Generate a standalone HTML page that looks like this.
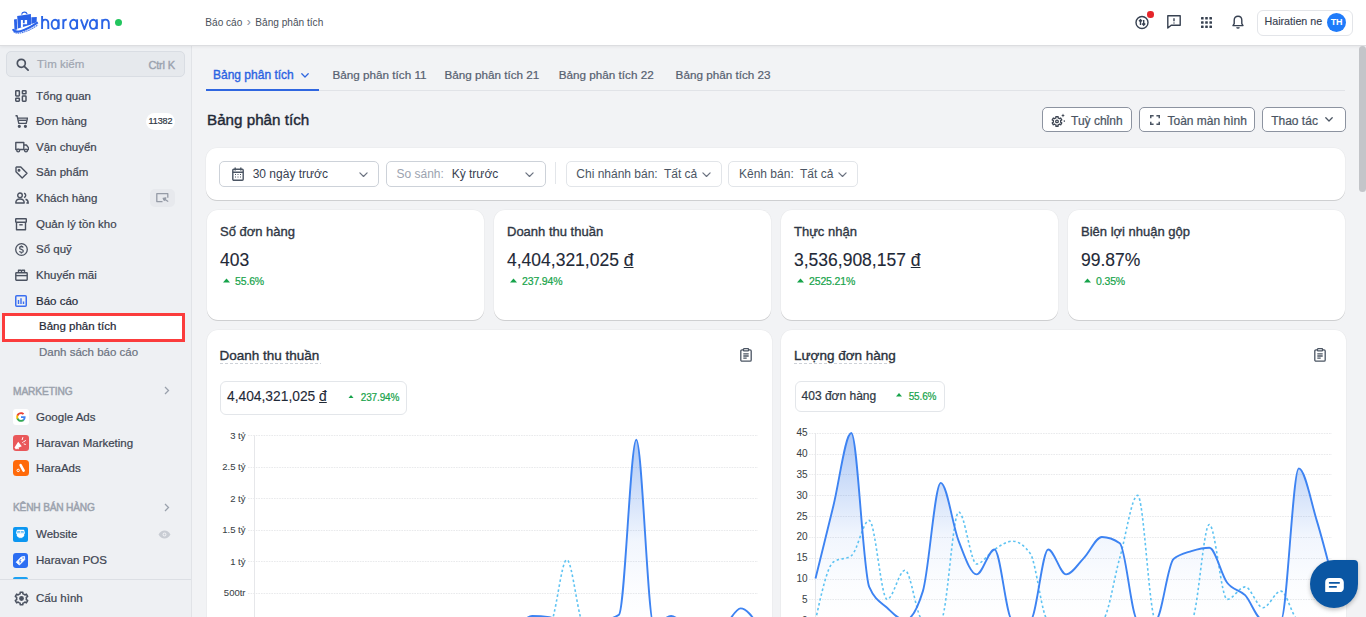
<!DOCTYPE html>
<html><head><meta charset="utf-8">
<style>
*{box-sizing:border-box;margin:0;padding:0}
html,body{width:1366px;height:617px;overflow:hidden;background:#f2f3f5;font-family:"Liberation Sans",sans-serif;}
.abs{position:absolute}
svg{display:block}
#header{position:absolute;left:0;top:0;width:1366px;height:46px;background:#fff;border-bottom:1px solid #dcdde0;z-index:5;box-shadow:0 1px 3px rgba(0,0,0,.06)}
#side{position:absolute;left:0;top:46px;width:192px;height:571px;background:#eef0f3;border-right:1px solid #e1e3e7;z-index:2}
.si{position:absolute;left:0;width:191px;height:25.6px;line-height:25.6px;font-size:11.5px;white-space:nowrap}
.si .ic{position:absolute;left:15px;top:6.8px;width:14px;height:13px;display:flex;align-items:center}
.si .tx{position:absolute;left:36px;top:0}
.t{position:absolute;white-space:nowrap}
.btn{position:absolute;top:107px;height:24.6px;border:1px solid #8c93a0;border-radius:5px;background:#fff}
.card{position:absolute;background:#fff;border-radius:11px;box-shadow:0 1px 0.5px rgba(0,0,0,.13),0 0 0 0.6px rgba(0,0,0,.04)}
.dd{position:absolute;height:26px;border:1px solid #e2e5e9;border-radius:5px;background:#fff}
#main{position:absolute;left:192px;top:46px;width:1174px;height:571px;overflow:hidden}
#main > .inner{position:absolute;left:-192px;top:-46px;width:1366px;height:617px}
</style></head><body>
<div id="main"><div class="inner">
<div class="t" style="left:213px;top:69.24px;font-size:12px;line-height:1;color:#2a62e2;font-weight:400;-webkit-text-stroke:0.35px #2a62e2">Bảng phân tích</div>
<div class="abs" style="left:301px;top:73px"><svg width="8" height="4.8" viewBox="0 0 10 6" fill="none" stroke="#2f66e0" stroke-width="1.6" stroke-linecap="round" stroke-linejoin="round"><path d="M1 1l4 4 4-4"/></svg></div>
<div class="abs" style="left:206px;top:90px;width:1139px;height:1px;background:#e1e3e7"></div>
<div class="abs" style="left:206px;top:89px;width:113px;height:2px;background:#2f66e0"></div>
<div class="t" style="left:332.5px;top:69.30px;font-size:11.7px;line-height:1;color:#566070;font-weight:400;-webkit-text-stroke:0.21px #566070;">Bảng phân tích 11</div>
<div class="t" style="left:444.4px;top:69.30px;font-size:11.7px;line-height:1;color:#566070;font-weight:400;-webkit-text-stroke:0.21px #566070;">Bảng phân tích 21</div>
<div class="t" style="left:558.8px;top:69.30px;font-size:11.7px;line-height:1;color:#566070;font-weight:400;-webkit-text-stroke:0.21px #566070;">Bảng phân tích 22</div>
<div class="t" style="left:675.6px;top:69.30px;font-size:11.7px;line-height:1;color:#566070;font-weight:400;-webkit-text-stroke:0.21px #566070;">Bảng phân tích 23</div>
<div class="t" style="left:207px;top:111.73px;font-size:15.2px;line-height:1;color:#1f2937;font-weight:400;-webkit-text-stroke:0.4px #1f2937">Bảng phân tích</div>
<div class="btn" style="left:1042px;width:89.5px"></div>
<div class="btn" style="left:1138.5px;width:116px"></div>
<div class="btn" style="left:1261.5px;width:84px"></div>
<div class="t" style="left:1071px;top:114.64px;font-size:12px;line-height:1;color:#4b5563;font-weight:400;-webkit-text-stroke:0.22px #4b5563;">Tuỳ chỉnh</div>
<div class="t" style="left:1167.5px;top:114.64px;font-size:12px;line-height:1;color:#4b5563;font-weight:400;-webkit-text-stroke:0.22px #4b5563;">Toàn màn hình</div>
<div class="t" style="left:1271.2px;top:114.64px;font-size:12px;line-height:1;color:#4b5563;font-weight:400;-webkit-text-stroke:0.22px #4b5563;">Thao tác</div>
<div class="abs" style="left:1325px;top:117px"><svg width="8" height="4.8" viewBox="0 0 10 6" fill="none" stroke="#4b5563" stroke-width="1.6" stroke-linecap="round" stroke-linejoin="round"><path d="M1 1l4 4 4-4"/></svg></div>
<svg class="abs" style="left:1051.3px;top:113px" width="16" height="15" viewBox="0 0 16 15" fill="none" stroke="#3d4552" stroke-width="1.3" stroke-linejoin="round"><path d="M4.32,5.10 L4.92,4.86 L4.88,3.53 L7.12,3.53 L7.08,4.86 L8.02,5.30 L8.52,5.69 L9.66,4.99 L10.78,6.94 L9.61,7.57 L9.69,8.59 L9.61,9.23 L10.78,9.86 L9.66,11.81 L8.52,11.11 L7.68,11.70 L7.08,11.94 L7.12,13.27 L4.88,13.27 L4.92,11.94 L3.98,11.50 L3.48,11.11 L2.34,11.81 L1.22,9.86 L2.39,9.23 L2.31,8.21 L2.39,7.57 L1.22,6.94 L2.34,4.99 L3.48,5.69Z"/><circle cx="6" cy="8.4" r="1.3"/><path d="M12,0.6 L12.6,1.9 L13.9,2.5 L12.6,3.1 L12,4.4 L11.4,3.1 L10.1,2.5 L11.4,1.9Z" fill="#3d4552" stroke="none"/><circle cx="13.3" cy="8.1" r=".8" fill="#3d4552" stroke="none"/></svg>
<svg class="abs" style="left:1150px;top:115px" width="10" height="10" viewBox="0 0 10 10" fill="none" stroke="#4b5563" stroke-width="1.5"><path d="M.75 3.2V.75h2.9M6.4 .75h2.85v2.45M9.25 6.8v2.45H6.4M3.6 9.25H.75V6.8"/></svg>
<div class="card" style="left:206px;top:148px;width:1139px;height:52px"></div>
<div class="dd" style="left:219px;top:161px;width:160px;border-color:#cdd2d9"></div>
<div class="dd" style="left:386px;top:161px;width:159.5px;border-color:#cdd2d9"></div>
<div class="abs" style="left:555px;top:162px;width:1px;height:22px;background:#e3e6ea"></div>
<div class="dd" style="left:566px;top:161px;width:155.5px"></div>
<div class="dd" style="left:728px;top:161px;width:129.5px"></div>
<svg class="abs" style="left:232px;top:167px" width="12" height="14" viewBox="0 0 12 14" fill="none" stroke="#4b5563" stroke-width="1.4"><rect x="0.8" y="2.2" width="10.4" height="11" rx="1"/><path d="M3.2 0.5v3M8.8 0.5v3M0.8 5.2h10.4"/><path d="M3 7.5h1M5.5 7.5h1M8 7.5h1M3 10h1M5.5 10h1M8 10h1" stroke-width="1.2"/></svg>
<div class="t" style="left:252.7px;top:167.84px;font-size:12px;line-height:1;color:#374151;font-weight:400;">30 ngày trước</div>
<div class="abs" style="left:359px;top:171.5px"><svg width="9" height="5.4" viewBox="0 0 10 6" fill="none" stroke="#6b7280" stroke-width="1.3" stroke-linecap="round" stroke-linejoin="round"><path d="M1 1l4 4 4-4"/></svg></div>
<div class="t" style="left:396.5px;top:167.84px;font-size:12px;line-height:1;color:#9ca3af;font-weight:400;">So sánh:</div>
<div class="t" style="left:451.7px;top:167.84px;font-size:12px;line-height:1;color:#374151;font-weight:400;">Kỳ trước</div>
<div class="abs" style="left:525px;top:171.5px"><svg width="9" height="5.4" viewBox="0 0 10 6" fill="none" stroke="#6b7280" stroke-width="1.3" stroke-linecap="round" stroke-linejoin="round"><path d="M1 1l4 4 4-4"/></svg></div>
<div class="t" style="left:576.3px;top:167.84px;font-size:12px;line-height:1;color:#4b5563;font-weight:400;">Chi nhánh bán:</div>
<div class="t" style="left:663.9px;top:167.84px;font-size:12px;line-height:1;color:#4b5563;font-weight:400;">Tất cả</div>
<div class="abs" style="left:702px;top:171.5px"><svg width="9" height="5.4" viewBox="0 0 10 6" fill="none" stroke="#6b7280" stroke-width="1.3" stroke-linecap="round" stroke-linejoin="round"><path d="M1 1l4 4 4-4"/></svg></div>
<div class="t" style="left:739px;top:167.84px;font-size:12px;line-height:1;color:#4b5563;font-weight:400;">Kênh bán:</div>
<div class="t" style="left:800px;top:167.84px;font-size:12px;line-height:1;color:#4b5563;font-weight:400;">Tất cả</div>
<div class="abs" style="left:838px;top:171.5px"><svg width="9" height="5.4" viewBox="0 0 10 6" fill="none" stroke="#6b7280" stroke-width="1.3" stroke-linecap="round" stroke-linejoin="round"><path d="M1 1l4 4 4-4"/></svg></div>
<div class="card" style="left:207px;top:210px;width:277px;height:110px"></div>
<div class="t" style="left:220px;top:225.20px;font-size:13px;line-height:1;color:#2f3744;font-weight:400;-webkit-text-stroke:0.35px #2f3744">Số đơn hàng</div>
<div class="t" style="left:220px;top:252.39px;font-size:17.5px;line-height:1;color:#1f2937;font-weight:400;-webkit-text-stroke:0.12px #1f2937">403</div>
<svg class="abs" style="left:223px;top:278px" width="7" height="5" viewBox="0 0 7 5"><path d="M0 4.5L3.5 0.5 7 4.5z" fill="#16a34a"/></svg>
<div class="t" style="left:235px;top:275.71px;font-size:10.5px;line-height:1;color:#16a34a;font-weight:400;-webkit-text-stroke:0.2px #16a34a;letter-spacing:-0.15px">55.6%</div>
<div class="card" style="left:494px;top:210px;width:277px;height:110px"></div>
<div class="t" style="left:507px;top:225.20px;font-size:13px;line-height:1;color:#2f3744;font-weight:400;-webkit-text-stroke:0.35px #2f3744">Doanh thu thuần</div>
<div class="t" style="left:507px;top:252.39px;font-size:17.5px;line-height:1;color:#1f2937;font-weight:400;-webkit-text-stroke:0.12px #1f2937">4,404,321,025 <u>đ</u></div>
<svg class="abs" style="left:510px;top:278px" width="7" height="5" viewBox="0 0 7 5"><path d="M0 4.5L3.5 0.5 7 4.5z" fill="#16a34a"/></svg>
<div class="t" style="left:522px;top:275.71px;font-size:10.5px;line-height:1;color:#16a34a;font-weight:400;-webkit-text-stroke:0.2px #16a34a;letter-spacing:-0.15px">237.94%</div>
<div class="card" style="left:781px;top:210px;width:277px;height:110px"></div>
<div class="t" style="left:794px;top:225.20px;font-size:13px;line-height:1;color:#2f3744;font-weight:400;-webkit-text-stroke:0.35px #2f3744">Thực nhận</div>
<div class="t" style="left:794px;top:252.39px;font-size:17.5px;line-height:1;color:#1f2937;font-weight:400;-webkit-text-stroke:0.12px #1f2937">3,536,908,157 <u>đ</u></div>
<svg class="abs" style="left:797px;top:278px" width="7" height="5" viewBox="0 0 7 5"><path d="M0 4.5L3.5 0.5 7 4.5z" fill="#16a34a"/></svg>
<div class="t" style="left:809px;top:275.71px;font-size:10.5px;line-height:1;color:#16a34a;font-weight:400;-webkit-text-stroke:0.2px #16a34a;letter-spacing:-0.15px">2525.21%</div>
<div class="card" style="left:1068px;top:210px;width:277px;height:110px"></div>
<div class="t" style="left:1081px;top:225.20px;font-size:13px;line-height:1;color:#2f3744;font-weight:400;-webkit-text-stroke:0.35px #2f3744">Biên lợi nhuận gộp</div>
<div class="t" style="left:1081px;top:252.39px;font-size:17.5px;line-height:1;color:#1f2937;font-weight:400;-webkit-text-stroke:0.12px #1f2937">99.87%</div>
<svg class="abs" style="left:1084px;top:278px" width="7" height="5" viewBox="0 0 7 5"><path d="M0 4.5L3.5 0.5 7 4.5z" fill="#16a34a"/></svg>
<div class="t" style="left:1096px;top:275.71px;font-size:10.5px;line-height:1;color:#16a34a;font-weight:400;-webkit-text-stroke:0.2px #16a34a;letter-spacing:-0.15px">0.35%</div>
<div class="card" style="left:207px;top:330px;width:564.5px;height:320px"></div>
<div class="card" style="left:781px;top:330px;width:564.5px;height:320px"></div>
<div class="t" style="left:219.5px;top:349.07px;font-size:13.5px;line-height:1;color:#2a313c;font-weight:400;-webkit-text-stroke:0.35px #2a313c">Doanh thu thuần</div>
<div class="abs" style="left:220px;top:362.5px;width:101px;height:1.5px;background:repeating-linear-gradient(90deg,#cdd1d7 0 3px,transparent 3px 5px)"></div>
<div class="t" style="left:794px;top:349.07px;font-size:13.5px;line-height:1;color:#2a313c;font-weight:400;-webkit-text-stroke:0.35px #2a313c">Lượng đơn hàng</div>
<div class="abs" style="left:794px;top:362.5px;width:100px;height:1.5px;background:repeating-linear-gradient(90deg,#cdd1d7 0 3px,transparent 3px 5px)"></div>
<div class="abs" style="left:740px;top:348px"><svg width="12" height="14" viewBox="0 0 12 14" fill="none" stroke="#4b5563" stroke-width="1.3"><rect x="0.8" y="1.8" width="10.4" height="11.4" rx="1.2"/><rect x="3.5" y="0.7" width="5" height="2.2" rx=".5" fill="#fff"/><path d="M3.3 5.8h5.4M3.3 8h5.4M3.3 10.2h3.4"/></svg></div>
<div class="abs" style="left:1314px;top:348px"><svg width="12" height="14" viewBox="0 0 12 14" fill="none" stroke="#4b5563" stroke-width="1.3"><rect x="0.8" y="1.8" width="10.4" height="11.4" rx="1.2"/><rect x="3.5" y="0.7" width="5" height="2.2" rx=".5" fill="#fff"/><path d="M3.3 5.8h5.4M3.3 8h5.4M3.3 10.2h3.4"/></svg></div>
<div class="abs" style="left:220px;top:381px;width:187px;height:33.5px;border:1px solid #e3e6ea;border-radius:6px"></div>
<div class="t" style="left:227px;top:390.32px;font-size:13.8px;line-height:1;color:#1f2937;font-weight:400;-webkit-text-stroke:0.1px #1f2937">4,404,321,025 <u>đ</u></div>
<svg class="abs" style="left:348px;top:394.8px" width="6" height="3.6" viewBox="0 0 7 4.2"><path d="M0 4.2L3.5 0 7 4.2z" fill="#16a34a"/></svg>
<div class="t" style="left:360.8px;top:393.14px;font-size:10px;line-height:1;color:#16a34a;font-weight:400;-webkit-text-stroke:0.2px #16a34a;letter-spacing:-0.15px">237.94%</div>
<div class="abs" style="left:794.5px;top:381px;width:150px;height:30.5px;border:1px solid #e3e6ea;border-radius:6px"></div>
<div class="t" style="left:801.6px;top:390.14px;font-size:12px;line-height:1;color:#2f3744;font-weight:400;-webkit-text-stroke:0.22px #2f3744;">403 đơn hàng</div>
<svg class="abs" style="left:895.5px;top:393.3px" width="6" height="3.6" viewBox="0 0 7 4.2"><path d="M0 4.2L3.5 0 7 4.2z" fill="#16a34a"/></svg>
<div class="t" style="left:908.7px;top:391.84px;font-size:10px;line-height:1;color:#16a34a;font-weight:400;-webkit-text-stroke:0.2px #16a34a;letter-spacing:-0.15px">55.6%</div>
<svg class="abs" style="left:0;top:0" width="1366" height="617" viewBox="0 0 1366 617">
<defs><linearGradient id="g1" x1="0" y1="0" x2="0" y2="1"><stop offset="0" stop-color="#3b7be8" stop-opacity=".42"/><stop offset=".25" stop-color="#3b7be8" stop-opacity=".26"/><stop offset=".55" stop-color="#3b7be8" stop-opacity=".07"/><stop offset=".8" stop-color="#3b7be8" stop-opacity=".02"/><stop offset="1" stop-color="#3b7be8" stop-opacity="0"/></linearGradient>
<linearGradient id="g2" x1="0" y1="0" x2="0" y2="1"><stop offset="0" stop-color="#3b7be8" stop-opacity=".42"/><stop offset=".25" stop-color="#3b7be8" stop-opacity=".26"/><stop offset=".55" stop-color="#3b7be8" stop-opacity=".07"/><stop offset=".8" stop-color="#3b7be8" stop-opacity=".02"/><stop offset="1" stop-color="#3b7be8" stop-opacity="0"/></linearGradient></defs>
<line x1="248" y1="435.5" x2="758" y2="435.5" stroke="#e9eaec" stroke-dasharray="1.6 1"/>
<text x="245.5" y="438.5" font-size="9.5" fill="#3a3f46" stroke="#3a3f46" stroke-width="0.06" text-anchor="end" font-family="Liberation Sans">3 tỷ</text>
<line x1="248" y1="467.5" x2="758" y2="467.5" stroke="#e9eaec" stroke-dasharray="1.6 1"/>
<text x="245.5" y="470.1" font-size="9.5" fill="#3a3f46" stroke="#3a3f46" stroke-width="0.06" text-anchor="end" font-family="Liberation Sans">2.5 tỷ</text>
<line x1="248" y1="498.5" x2="758" y2="498.5" stroke="#e9eaec" stroke-dasharray="1.6 1"/>
<text x="245.5" y="501.7" font-size="9.5" fill="#3a3f46" stroke="#3a3f46" stroke-width="0.06" text-anchor="end" font-family="Liberation Sans">2 tỷ</text>
<line x1="248" y1="530.5" x2="758" y2="530.5" stroke="#e9eaec" stroke-dasharray="1.6 1"/>
<text x="245.5" y="533.2" font-size="9.5" fill="#3a3f46" stroke="#3a3f46" stroke-width="0.06" text-anchor="end" font-family="Liberation Sans">1.5 tỷ</text>
<line x1="248" y1="561.5" x2="758" y2="561.5" stroke="#e9eaec" stroke-dasharray="1.6 1"/>
<text x="245.5" y="564.8" font-size="9.5" fill="#3a3f46" stroke="#3a3f46" stroke-width="0.06" text-anchor="end" font-family="Liberation Sans">1 tỷ</text>
<line x1="248" y1="593.5" x2="758" y2="593.5" stroke="#e9eaec" stroke-dasharray="1.6 1"/>
<text x="245.5" y="596.4" font-size="9.5" fill="#3a3f46" stroke="#3a3f46" stroke-width="0.06" text-anchor="end" font-family="Liberation Sans">500tr</text>
<line x1="254.5" y1="435.5" x2="254.5" y2="617" stroke="#e6e7ea"/>
<line x1="809" y1="433.5" x2="1332" y2="433.5" stroke="#e9eaec" stroke-dasharray="1.6 1"/>
<text x="807.5" y="436.2" font-size="10" fill="#3a3f46" stroke="#3a3f46" stroke-width="0.06" text-anchor="end" font-family="Liberation Sans">45</text>
<line x1="809" y1="454.5" x2="1332" y2="454.5" stroke="#e9eaec" stroke-dasharray="1.6 1"/>
<text x="807.5" y="457.0" font-size="10" fill="#3a3f46" stroke="#3a3f46" stroke-width="0.06" text-anchor="end" font-family="Liberation Sans">40</text>
<line x1="809" y1="474.5" x2="1332" y2="474.5" stroke="#e9eaec" stroke-dasharray="1.6 1"/>
<text x="807.5" y="477.8" font-size="10" fill="#3a3f46" stroke="#3a3f46" stroke-width="0.06" text-anchor="end" font-family="Liberation Sans">35</text>
<line x1="809" y1="495.5" x2="1332" y2="495.5" stroke="#e9eaec" stroke-dasharray="1.6 1"/>
<text x="807.5" y="498.7" font-size="10" fill="#3a3f46" stroke="#3a3f46" stroke-width="0.06" text-anchor="end" font-family="Liberation Sans">30</text>
<line x1="809" y1="516.5" x2="1332" y2="516.5" stroke="#e9eaec" stroke-dasharray="1.6 1"/>
<text x="807.5" y="519.5" font-size="10" fill="#3a3f46" stroke="#3a3f46" stroke-width="0.06" text-anchor="end" font-family="Liberation Sans">25</text>
<line x1="809" y1="537.5" x2="1332" y2="537.5" stroke="#e9eaec" stroke-dasharray="1.6 1"/>
<text x="807.5" y="540.3" font-size="10" fill="#3a3f46" stroke="#3a3f46" stroke-width="0.06" text-anchor="end" font-family="Liberation Sans">20</text>
<line x1="809" y1="558.5" x2="1332" y2="558.5" stroke="#e9eaec" stroke-dasharray="1.6 1"/>
<text x="807.5" y="561.1" font-size="10" fill="#3a3f46" stroke="#3a3f46" stroke-width="0.06" text-anchor="end" font-family="Liberation Sans">15</text>
<line x1="809" y1="579.5" x2="1332" y2="579.5" stroke="#e9eaec" stroke-dasharray="1.6 1"/>
<text x="807.5" y="581.9" font-size="10" fill="#3a3f46" stroke="#3a3f46" stroke-width="0.06" text-anchor="end" font-family="Liberation Sans">10</text>
<line x1="809" y1="599.5" x2="1332" y2="599.5" stroke="#e9eaec" stroke-dasharray="1.6 1"/>
<text x="807.5" y="602.8" font-size="10" fill="#3a3f46" stroke="#3a3f46" stroke-width="0.06" text-anchor="end" font-family="Liberation Sans">5</text>
<line x1="809" y1="620.5" x2="1332" y2="620.5" stroke="#e9eaec" stroke-dasharray="1.6 1"/>
<text x="807.5" y="623.6" font-size="10" fill="#3a3f46" stroke="#3a3f46" stroke-width="0.06" text-anchor="end" font-family="Liberation Sans">0</text>
<line x1="815.5" y1="433" x2="815.5" y2="617" stroke="#e6e7ea"/>
<path d="M254.0,624.8 C259.8,624.8 265.6,624.8 271.4,624.8 C277.2,624.8 283.0,624.8 288.8,624.8 C294.6,624.8 300.3,624.8 306.1,624.8 C311.9,624.8 317.7,624.8 323.5,624.8 C329.3,624.8 335.1,624.8 340.9,624.8 C346.7,624.8 352.5,624.8 358.3,624.8 C364.1,624.8 369.9,624.8 375.7,624.8 C381.4,624.8 387.2,624.8 393.0,624.8 C398.8,624.8 404.6,624.8 410.4,624.8 C416.2,624.8 422.0,624.8 427.8,624.8 C433.6,624.8 439.4,624.8 445.2,624.8 C451.0,624.8 456.8,624.8 462.6,624.8 C468.3,624.8 474.1,624.8 479.9,624.8 C485.7,624.8 491.5,624.8 497.3,624.8 C503.1,624.8 508.9,624.8 514.7,624.8 C520.5,624.8 526.3,616.0 532.1,616.0 C537.9,616.0 543.7,616.4 549.4,617.2 C555.2,618.1 561.0,624.8 566.8,624.8 C572.6,624.8 578.4,624.8 584.2,624.8 C590.0,624.8 595.8,622.7 601.6,621.0 C607.4,619.3 613.2,618.9 619.0,614.7 C624.8,610.5 630.6,439.7 636.3,439.7 C642.1,439.7 647.9,624.8 653.7,624.8 C659.5,624.8 665.3,616.0 671.1,616.0 C676.9,616.0 682.7,624.8 688.5,624.8 C694.3,624.8 700.1,624.8 705.9,624.8 C711.7,624.8 717.4,624.8 723.2,624.8 C729.0,624.8 734.8,608.4 740.6,608.4 C746.4,608.4 752.2,616.6 758.0,624.8 L758.0,624.8 L254.0,624.8 Z" fill="url(#g1)"/>
<path d="M254.0,624.8 C259.8,624.8 265.6,624.8 271.4,624.8 C277.2,624.8 283.0,624.8 288.8,624.8 C294.6,624.8 300.3,624.8 306.1,624.8 C311.9,624.8 317.7,624.8 323.5,624.8 C329.3,624.8 335.1,624.8 340.9,624.8 C346.7,624.8 352.5,624.8 358.3,624.8 C364.1,624.8 369.9,624.8 375.7,624.8 C381.4,624.8 387.2,624.8 393.0,624.8 C398.8,624.8 404.6,624.8 410.4,624.8 C416.2,624.8 422.0,624.8 427.8,624.8 C433.6,624.8 439.4,624.8 445.2,624.8 C451.0,624.8 456.8,624.8 462.6,624.8 C468.3,624.8 474.1,624.8 479.9,624.8 C485.7,624.8 491.5,624.8 497.3,624.8 C503.1,624.8 508.9,624.8 514.7,624.8 C520.5,624.8 526.3,624.8 532.1,624.8 C537.9,624.8 543.7,624.8 549.4,624.8 C555.2,624.8 561.0,559.7 566.8,559.7 C572.6,559.7 578.4,624.8 584.2,624.8 C590.0,624.8 595.8,624.8 601.6,624.8 C607.4,624.8 613.2,624.8 619.0,624.8 C624.8,624.8 630.6,624.8 636.3,624.8 C642.1,624.8 647.9,624.8 653.7,624.8 C659.5,624.8 665.3,624.8 671.1,624.8 C676.9,624.8 682.7,624.8 688.5,624.8 C694.3,624.8 700.1,624.8 705.9,624.8 C711.7,624.8 717.4,624.8 723.2,624.8 C729.0,624.8 734.8,624.8 740.6,624.8 C746.4,624.8 752.2,624.8 758.0,624.8" fill="none" stroke="#5ec3f2" stroke-width="1.6" stroke-dasharray="2.5 2.5"/>
<path d="M254.0,624.8 C259.8,624.8 265.6,624.8 271.4,624.8 C277.2,624.8 283.0,624.8 288.8,624.8 C294.6,624.8 300.3,624.8 306.1,624.8 C311.9,624.8 317.7,624.8 323.5,624.8 C329.3,624.8 335.1,624.8 340.9,624.8 C346.7,624.8 352.5,624.8 358.3,624.8 C364.1,624.8 369.9,624.8 375.7,624.8 C381.4,624.8 387.2,624.8 393.0,624.8 C398.8,624.8 404.6,624.8 410.4,624.8 C416.2,624.8 422.0,624.8 427.8,624.8 C433.6,624.8 439.4,624.8 445.2,624.8 C451.0,624.8 456.8,624.8 462.6,624.8 C468.3,624.8 474.1,624.8 479.9,624.8 C485.7,624.8 491.5,624.8 497.3,624.8 C503.1,624.8 508.9,624.8 514.7,624.8 C520.5,624.8 526.3,616.0 532.1,616.0 C537.9,616.0 543.7,616.4 549.4,617.2 C555.2,618.1 561.0,624.8 566.8,624.8 C572.6,624.8 578.4,624.8 584.2,624.8 C590.0,624.8 595.8,622.7 601.6,621.0 C607.4,619.3 613.2,618.9 619.0,614.7 C624.8,610.5 630.6,439.7 636.3,439.7 C642.1,439.7 647.9,624.8 653.7,624.8 C659.5,624.8 665.3,616.0 671.1,616.0 C676.9,616.0 682.7,624.8 688.5,624.8 C694.3,624.8 700.1,624.8 705.9,624.8 C711.7,624.8 717.4,624.8 723.2,624.8 C729.0,624.8 734.8,608.4 740.6,608.4 C746.4,608.4 752.2,616.6 758.0,624.8" fill="none" stroke="#3d83f2" stroke-width="1.9"/>
<path d="M815.5,578.6 C821.5,554.3 827.4,530.1 833.4,505.8 C839.4,481.5 845.3,433.0 851.3,433.0 C857.3,433.0 863.2,573.1 869.2,586.9 C875.2,600.8 881.1,602.2 887.1,607.7 C893.1,613.3 899.0,620.2 905.0,620.2 C911.0,620.2 916.9,610.5 922.9,591.1 C928.9,571.7 934.8,482.9 940.8,482.9 C946.8,482.9 952.7,525.9 958.7,541.2 C964.7,556.4 970.6,574.4 976.6,574.4 C982.6,574.4 988.5,549.5 994.5,549.5 C1000.5,549.5 1006.4,620.2 1012.4,620.2 C1018.4,620.2 1024.3,620.2 1030.3,620.2 C1036.3,620.2 1042.2,549.5 1048.2,549.5 C1054.2,549.5 1060.1,574.4 1066.1,574.4 C1072.1,574.4 1078.0,564.0 1084.0,557.8 C1090.0,551.6 1095.9,537.0 1101.9,537.0 C1107.9,537.0 1113.8,539.1 1119.8,543.2 C1125.8,547.4 1131.7,620.2 1137.7,620.2 C1143.7,620.2 1149.6,620.2 1155.6,620.2 C1161.6,620.2 1167.5,564.3 1173.5,559.0 C1179.5,553.8 1185.4,553.0 1191.4,551.1 C1197.4,549.3 1203.3,547.8 1209.3,547.8 C1215.3,547.8 1221.2,574.9 1227.2,582.8 C1233.2,590.7 1239.1,589.0 1245.1,595.2 C1251.1,601.5 1257.0,620.2 1263.0,620.2 C1269.0,620.2 1274.9,620.2 1280.9,620.2 C1286.9,620.2 1292.8,468.4 1298.8,468.4 C1304.8,468.4 1310.7,500.6 1316.7,520.4 C1322.7,540.1 1328.6,563.5 1334.6,586.9 L1334.6,620.2 L815.5,620.2 Z" fill="url(#g2)"/>
<path d="M815.5,620.2 C821.5,593.2 827.4,566.1 833.4,562.0 C839.4,557.8 845.3,559.9 851.3,555.7 C857.3,551.6 863.2,520.4 869.2,520.4 C875.2,520.4 881.1,599.4 887.1,599.4 C893.1,599.4 899.0,570.3 905.0,570.3 C911.0,570.3 916.9,620.2 922.9,620.2 C928.9,620.2 934.8,620.2 940.8,620.2 C946.8,620.2 952.7,512.0 958.7,512.0 C964.7,512.0 970.6,564.0 976.6,564.0 C982.6,564.0 988.5,553.3 994.5,549.5 C1000.5,545.7 1006.4,541.2 1012.4,541.2 C1018.4,541.2 1024.3,545.3 1030.3,553.6 C1036.3,562.0 1042.2,620.2 1048.2,620.2 C1054.2,620.2 1060.1,620.2 1066.1,620.2 C1072.1,620.2 1078.0,620.2 1084.0,620.2 C1090.0,620.2 1095.9,620.2 1101.9,620.2 C1107.9,620.2 1113.8,578.6 1119.8,557.8 C1125.8,537.0 1131.7,495.4 1137.7,495.4 C1143.7,495.4 1149.6,620.2 1155.6,620.2 C1161.6,620.2 1167.5,620.2 1173.5,620.2 C1179.5,620.2 1185.4,620.2 1191.4,620.2 C1197.4,620.2 1203.3,524.5 1209.3,524.5 C1215.3,524.5 1221.2,599.4 1227.2,599.4 C1233.2,599.4 1239.1,586.9 1245.1,586.9 C1251.1,586.9 1257.0,607.7 1263.0,607.7 C1269.0,607.7 1274.9,591.1 1280.9,591.1 C1286.9,591.1 1292.8,620.2 1298.8,620.2 C1304.8,620.2 1310.7,618.1 1316.7,618.1 C1322.7,618.1 1328.6,619.2 1334.6,620.2" fill="none" stroke="#5ec3f2" stroke-width="1.6" stroke-dasharray="2.5 2.5"/>
<path d="M815.5,578.6 C821.5,554.3 827.4,530.1 833.4,505.8 C839.4,481.5 845.3,433.0 851.3,433.0 C857.3,433.0 863.2,573.1 869.2,586.9 C875.2,600.8 881.1,602.2 887.1,607.7 C893.1,613.3 899.0,620.2 905.0,620.2 C911.0,620.2 916.9,610.5 922.9,591.1 C928.9,571.7 934.8,482.9 940.8,482.9 C946.8,482.9 952.7,525.9 958.7,541.2 C964.7,556.4 970.6,574.4 976.6,574.4 C982.6,574.4 988.5,549.5 994.5,549.5 C1000.5,549.5 1006.4,620.2 1012.4,620.2 C1018.4,620.2 1024.3,620.2 1030.3,620.2 C1036.3,620.2 1042.2,549.5 1048.2,549.5 C1054.2,549.5 1060.1,574.4 1066.1,574.4 C1072.1,574.4 1078.0,564.0 1084.0,557.8 C1090.0,551.6 1095.9,537.0 1101.9,537.0 C1107.9,537.0 1113.8,539.1 1119.8,543.2 C1125.8,547.4 1131.7,620.2 1137.7,620.2 C1143.7,620.2 1149.6,620.2 1155.6,620.2 C1161.6,620.2 1167.5,564.3 1173.5,559.0 C1179.5,553.8 1185.4,553.0 1191.4,551.1 C1197.4,549.3 1203.3,547.8 1209.3,547.8 C1215.3,547.8 1221.2,574.9 1227.2,582.8 C1233.2,590.7 1239.1,589.0 1245.1,595.2 C1251.1,601.5 1257.0,620.2 1263.0,620.2 C1269.0,620.2 1274.9,620.2 1280.9,620.2 C1286.9,620.2 1292.8,468.4 1298.8,468.4 C1304.8,468.4 1310.7,500.6 1316.7,520.4 C1322.7,540.1 1328.6,563.5 1334.6,586.9" fill="none" stroke="#3d83f2" stroke-width="1.9"/>
</svg>
<div class="abs" style="left:1310px;top:560px;width:48px;height:48px;background:#0a56a3;border-radius:50% 4px 50% 50%;box-shadow:0 2px 4px rgba(0,0,0,.25)"></div>
<svg class="abs" style="left:1325px;top:577.6px" width="19" height="14.5" viewBox="0 0 19 14.5"><path d="M4.5 0h10a4.3 4.3 0 0 1 4.3 4.3v5.6a4.3 4.3 0 0 1-4.3 4.3H1.2a1 1 0 0 1-1-1V4.5A4.5 4.5 0 0 1 4.5 0z" fill="#fff"/><path d="M4.6 4.9h9.6M4.6 8.9h6.6" stroke="#0a56a3" stroke-width="1.6" stroke-linecap="round"/></svg>
</div></div>
<div class="abs" style="left:1359px;top:46px;width:7px;height:146px;border-radius:4px;background:#c3c5c9;z-index:6"></div>
<div id="header">

<svg class="abs" style="left:10px;top:8px" width="32" height="30" viewBox="0 0 32 30">
 <path d="M11.6,6.6 A2.9,2.9 0 0 1 17.2,6.1" fill="none" stroke="#2a62e8" stroke-width="1.1"/>
 <path d="M7.2,7.9 L20.9,6.0 L21.1,16.6 L7.9,20.6 Z" fill="#2a62e8"/>
 <path d="M4.0,11.4 L6.8,11.0 L7.3,21.4 L4.5,22.0 Z" fill="#2a62e8"/>
 <path d="M21.4,9.3 L26.8,9.0 L26.6,14.2 L21.4,16.0 Z" fill="#2a62e8"/>
 <path d="M10.9,12.0h2.0v3.2h1.8v-3.2h2.4v4.3h-2.4v-0.1h-1.8v3.3h-2.0z" fill="#fff"/>
 <path d="M2.9,21.2 C4.5,25.5 13,24.5 27.8,14.4" fill="none" stroke="#2a62e8" stroke-width="2.1"/>
 <path d="M3.6,23.6 C7,26.8 16,25 28,16.8" fill="none" stroke="#2a62e8" stroke-width="1.1" stroke-dasharray="1.6 .6" opacity=".85"/>
</svg>
<svg class="abs" style="left:0;top:0" width="120" height="40" viewBox="0 0 120 40" fill="none" stroke="#2a64e6" stroke-width="1.9" stroke-linejoin="round">
 <path d="M42.1,16V29M42.1,23.6Q42.1,19.6 45.2,19.6Q48.3,19.6 48.3,23.6V29"/>
 <ellipse cx="55.1" cy="24.3" rx="3.5" ry="4.6"/><path d="M58.6,19.3V29"/>
 <path d="M63.3,19.3V29M63.3,23.2Q63.3,19.6 66.8,19.6"/>
 <ellipse cx="73.6" cy="24.3" rx="3.5" ry="4.6"/><path d="M77.1,19.3V29"/>
 <path d="M80.9,19.4L84.4,29L87.9,19.4"/>
 <ellipse cx="93.3" cy="24.3" rx="3.5" ry="4.6"/><path d="M96.8,19.3V29"/>
 <path d="M102.2,19.3V29M102.2,23.6Q102.2,19.6 105.5,19.6Q108.8,19.6 108.8,23.6V29"/>
</svg>
<div class="abs" style="left:115px;top:19px;width:7px;height:7px;border-radius:50%;background:#22c55e"></div>

  <div class="t" style="left:205.3px;top:16.6px;font-size:10.1px;line-height:1;color:#4a505a">Báo cáo<span style="display:inline-block;width:13px;text-align:center;color:#8a9099;font-size:12px;line-height:10px">›</span>Bảng phân tích</div>

<svg class="abs" style="left:1135px;top:15px" width="15" height="15" viewBox="0 0 15 15" fill="none" stroke="#374151" stroke-width="1.4"><circle cx="7" cy="7.5" r="6"/><path d="M5.5 10V4.8M4 6.3l1.5-1.6 1.5 1.6M8.7 5v5.2M7.2 8.6l1.5 1.6 1.5-1.6"/></svg>
<div class="abs" style="left:1147px;top:11px;width:6.5px;height:6.5px;border-radius:50%;background:#e5252a"></div>
<svg class="abs" style="left:1167px;top:15px" width="14" height="14" viewBox="0 0 14 14" fill="none" stroke="#374151" stroke-width="1.4" stroke-linejoin="round"><path d="M0.8 0.8h12.4v9.4H4.2L0.8 13z"/><path d="M7 3.2v3M7 7.6v.8"/></svg>
<svg class="abs" style="left:1200.5px;top:16.5px" width="11" height="11" viewBox="0 0 11 11" fill="#374151"><rect x="0" y="0" width="2.6" height="2.6" rx=".5"/><rect x="4.2" y="0" width="2.6" height="2.6" rx=".5"/><rect x="8.4" y="0" width="2.6" height="2.6" rx=".5"/><rect x="0" y="4.2" width="2.6" height="2.6" rx=".5"/><rect x="4.2" y="4.2" width="2.6" height="2.6" rx=".5"/><rect x="8.4" y="4.2" width="2.6" height="2.6" rx=".5"/><rect x="0" y="8.4" width="2.6" height="2.6" rx=".5"/><rect x="4.2" y="8.4" width="2.6" height="2.6" rx=".5"/><rect x="8.4" y="8.4" width="2.6" height="2.6" rx=".5"/></svg>
<svg class="abs" style="left:1232px;top:15px" width="12" height="14" viewBox="0 0 12 14" fill="none" stroke="#374151" stroke-width="1.4" stroke-linejoin="round"><path d="M6 1.2c-2.3 0-3.8 1.7-3.8 4v3.5L1 10.6h10L9.8 8.7V5.2C9.8 2.9 8.3 1.2 6 1.2z"/><path d="M4.6 12.3c.4.6.8.8 1.4.8s1-.2 1.4-.8"/></svg>
<div class="abs" style="left:1257px;top:9.5px;width:96px;height:26px;border:1px solid #e3e5e9;border-radius:6px"></div>
<div class="abs" style="left:1327px;top:13px;width:19px;height:19px;border-radius:50%;background:#1f7bfa;color:#fff;font-size:9px;font-weight:700;line-height:19.5px;text-align:center;letter-spacing:-0.2px">TH</div>

  <div class="t" style="left:1264.5px;top:16.2px;font-size:10.7px;line-height:1;color:#374151;-webkit-text-stroke:0.15px #374151">Hairatien ne</div>
</div>
<div id="side"></div>
<div style="position:absolute;left:0;top:0;width:192px;height:617px;z-index:3">
  <div class="abs" style="left:6px;top:51px;width:179px;height:25.5px;border:1px solid #d9dde3;background:#e6e9ed;border-radius:5px"></div>
<div class="abs" style="left:15px;top:89.5px"><svg width="12" height="12" viewBox="0 0 12 12" fill="none" stroke="#4b5260" stroke-width="1.5"><rect x="0.75" y="0.75" width="3.6" height="5.2" rx=".6"/><rect x="7.4" y="0.75" width="3.6" height="3" rx=".6"/><rect x="0.75" y="8.2" width="3.6" height="3" rx=".6"/><rect x="7.4" y="6" width="3.6" height="5.2" rx=".6"/></svg></div>
<div class="t" style="left:36px;top:91.27px;font-size:11.5px;line-height:1;color:#3d4451;font-weight:400;-webkit-text-stroke:0.21px #3d4451;">Tổng quan</div>
<div class="abs" style="left:15px;top:114.5px"><svg width="13" height="13" viewBox="0 0 13 13" fill="none" stroke="#4b5260" stroke-width="1.4" stroke-linejoin="round"><path d="M0.5 0.8h1.6l1.7 7.6h7.4l1.3-5.3H3"/><path d="M3.4 5.3h8.2"/><circle cx="4.3" cy="11.3" r=".9" fill="#4b5260"/><circle cx="10.4" cy="11.3" r=".9" fill="#4b5260"/></svg></div>
<div class="t" style="left:36px;top:116.27px;font-size:11.5px;line-height:1;color:#3d4451;font-weight:400;-webkit-text-stroke:0.21px #3d4451;">Đơn hàng</div>
<div class="abs" style="left:15px;top:140.5px"><svg width="14" height="12" viewBox="0 0 14 12" fill="none" stroke="#4b5260" stroke-width="1.4" stroke-linejoin="round"><path d="M0.8 1.5h8v7h-8z"/><path d="M8.8 4h2.6l2 2.6v2H8.8"/><circle cx="3.2" cy="9.5" r="1.4" fill="#eef0f3"/><circle cx="11" cy="9.5" r="1.4" fill="#eef0f3"/></svg></div>
<div class="t" style="left:36px;top:142.27px;font-size:11.5px;line-height:1;color:#3d4451;font-weight:400;-webkit-text-stroke:0.21px #3d4451;">Vận chuyển</div>
<div class="abs" style="left:15px;top:165.5px"><svg width="13" height="13" viewBox="0 0 13 13" fill="none" stroke="#4b5260" stroke-width="1.4" stroke-linejoin="round"><path d="M1 1.5v4.3l6.2 6.2 4.8-4.8L5.8 1H1.5z"/><circle cx="4" cy="4.2" r=".8" fill="#4b5260"/></svg></div>
<div class="t" style="left:36px;top:167.27px;font-size:11.5px;line-height:1;color:#3d4451;font-weight:400;-webkit-text-stroke:0.21px #3d4451;">Sản phẩm</div>
<div class="abs" style="left:15px;top:191.5px"><svg width="14" height="12" viewBox="0 0 14 12" fill="none" stroke="#4b5260" stroke-width="1.4"><circle cx="5" cy="3.3" r="2.3"/><path d="M0.8 11c0-2.6 1.9-4 4.2-4s4.2 1.4 4.2 4z" stroke-linejoin="round"/><path d="M9 1.2a2.2 2.2 0 0 1 0 4.3M10.5 7.2c1.6.4 2.7 1.7 2.7 3.8h-1.8"/></svg></div>
<div class="t" style="left:36px;top:193.27px;font-size:11.5px;line-height:1;color:#3d4451;font-weight:400;-webkit-text-stroke:0.21px #3d4451;">Khách hàng</div>
<div class="abs" style="left:15px;top:217.5px"><svg width="12" height="13" viewBox="0 0 12 13" fill="none" stroke="#4b5260" stroke-width="1.4" stroke-linejoin="round"><rect x="0.7" y="0.8" width="10.6" height="3.4" rx=".4"/><path d="M1.5 4.2v7.6h9V4.2"/><path d="M4.3 6.8h3.4"/></svg></div>
<div class="t" style="left:36px;top:219.27px;font-size:11.5px;line-height:1;color:#3d4451;font-weight:400;-webkit-text-stroke:0.21px #3d4451;">Quản lý tồn kho</div>
<div class="abs" style="left:15px;top:242.5px"><svg width="13" height="13" viewBox="0 0 13 13" fill="none" stroke="#4b5260" stroke-width="1.3"><circle cx="6.5" cy="6.5" r="5.8"/><path d="M8.2 4.6c-.3-.7-1-1.1-1.8-1.1-1 0-1.8.6-1.8 1.4 0 1.9 3.7 1 3.7 3 0 .8-.8 1.5-1.9 1.5-.9 0-1.6-.4-1.9-1.1M6.4 2.6v1M6.4 9.4v1"/></svg></div>
<div class="t" style="left:36px;top:244.27px;font-size:11.5px;line-height:1;color:#3d4451;font-weight:400;-webkit-text-stroke:0.21px #3d4451;">Sổ quỹ</div>
<div class="abs" style="left:15px;top:268.5px"><svg width="13" height="12" viewBox="0 0 13 12" fill="none" stroke="#4b5260" stroke-width="1.4" stroke-linejoin="round"><rect x="0.8" y="3.8" width="11.4" height="7.4" rx=".6"/><path d="M0.8 6.6h11.4"/><path d="M3.5 3.8V1.2h2.5l.5 1.2.5-1.2h2.5v2.6"/></svg></div>
<div class="t" style="left:36px;top:270.27px;font-size:11.5px;line-height:1;color:#3d4451;font-weight:400;-webkit-text-stroke:0.21px #3d4451;">Khuyến mãi</div>
<div class="abs" style="left:15px;top:294.5px"><svg width="12" height="12" viewBox="0 0 12 12" fill="none"><rect x="0.75" y="0.75" width="10.5" height="10.5" rx="1" stroke="#3b6ff0" stroke-width="1.5"/><path d="M3.5 5v4M6 3.2v5.8M8.5 6.5v2.5" stroke="#3b6ff0" stroke-width="1.4"/></svg></div>
<div class="t" style="left:36px;top:296.27px;font-size:11.5px;line-height:1;color:#1f2937;font-weight:400;-webkit-text-stroke:0.21px #1f2937;">Báo cáo</div>
<div class="abs" style="left:2px;top:313px;width:183px;height:28.5px;border:3px solid #fb3c3c;background:#fff"></div>
<div class="t" style="left:39px;top:321.27px;font-size:11.5px;line-height:1;color:#1f2937;font-weight:400;-webkit-text-stroke:0.21px #1f2937;">Bảng phân tích</div>
<div class="t" style="left:39px;top:347.27px;font-size:11.5px;line-height:1;color:#6b7280;font-weight:400;-webkit-text-stroke:0.21px #6b7280;">Danh sách báo cáo</div>
<div class="t" style="left:13px;top:386.97px;font-size:10.2px;line-height:1;color:#9ba2ad;font-weight:400;-webkit-text-stroke:0.45px #9ba2ad;letter-spacing:-0.1px">MARKETING</div>
<div class="abs" style="left:164px;top:386px"><svg width="6" height="9" viewBox="0 0 6 9" fill="none" stroke="#9aa1ac" stroke-width="1.3"><path d="M1 1l3.5 3.5L1 8"/></svg></div>
<div class="abs" style="left:13px;top:409px;width:16px;height:16px"><svg width="16" height="16" viewBox="0 0 16 16"><rect width="16" height="16" rx="3" fill="#fff"/><g transform="translate(3.2,3.2) scale(0.4)"><path d="M23.5 12.3c0-.8-.1-1.6-.2-2.3H12v4.4h6.5c-.3 1.5-1.1 2.7-2.4 3.6v3h3.9c2.2-2.1 3.5-5.1 3.5-8.7z" fill="#4285F4"/><path d="M12 24c3.2 0 6-1.1 8-2.9l-3.9-3c-1.1.7-2.5 1.2-4.1 1.2-3.1 0-5.8-2.1-6.7-5H1.3v3.1C3.3 21.3 7.3 24 12 24z" fill="#34A853"/><path d="M5.3 14.3c-.2-.7-.4-1.5-.4-2.3s.1-1.6.4-2.3V6.6H1.3C.5 8.2 0 10.1 0 12s.5 3.8 1.3 5.4l4-3.1z" fill="#FBBC05"/><path d="M12 4.8c1.8 0 3.3.6 4.6 1.8l3.4-3.4C18 1.2 15.2 0 12 0 7.3 0 3.3 2.7 1.3 6.6l4 3.1c.9-2.8 3.6-4.9 6.7-4.9z" fill="#EA4335"/></g></svg></div>
<div class="t" style="left:36px;top:412.27px;font-size:11.5px;line-height:1;color:#3d4451;font-weight:400;-webkit-text-stroke:0.21px #3d4451;">Google Ads</div>
<div class="abs" style="left:13px;top:435px;width:16px;height:16px"><svg width="16" height="16" viewBox="0 0 16 16"><rect width="16" height="16" rx="3" fill="#e9585a"/><path d="M1.5,12.5 L3,14.5 L4.2,13.6 L5,14.6 L6,13.8 L5.4,12.8 L8.8,11.2 L5.2,6.8 Z" fill="#fff"/><path d="M9.8,2.6l-.6,2M12.5,5.6l-1.6,1.1M12.4,9.4l-1.3-.4M9.6,7.4l.5-.5" stroke="#fff" stroke-width="1" stroke-linecap="round"/></svg></div>
<div class="t" style="left:36px;top:438.27px;font-size:11.5px;line-height:1;color:#3d4451;font-weight:400;-webkit-text-stroke:0.21px #3d4451;">Haravan Marketing</div>
<div class="abs" style="left:13px;top:460px;width:16px;height:16px"><svg width="16" height="16" viewBox="0 0 16 16"><rect width="16" height="16" rx="3.5" fill="#ff6a0a"/><path d="M7.6,5.2 L10.6,10.6" stroke="#fff" stroke-width="2.6" stroke-linecap="round"/><circle cx="5.2" cy="10.4" r="1.2" fill="none" stroke="#fff" stroke-width="1"/></svg></div>
<div class="t" style="left:36px;top:463.27px;font-size:11.5px;line-height:1;color:#3d4451;font-weight:400;-webkit-text-stroke:0.21px #3d4451;">HaraAds</div>
<div class="t" style="left:13px;top:503.47px;font-size:10.2px;line-height:1;color:#9ba2ad;font-weight:400;-webkit-text-stroke:0.45px #9ba2ad;letter-spacing:-0.2px">KÊNH BÁN HÀNG</div>
<div class="abs" style="left:164px;top:503px"><svg width="6" height="9" viewBox="0 0 6 9" fill="none" stroke="#9aa1ac" stroke-width="1.3"><path d="M1 1l3.5 3.5L1 8"/></svg></div>
<div class="abs" style="left:13px;top:526.5px;width:15px;height:15px"><svg width="15" height="15" viewBox="0 0 15 15"><rect width="15" height="15" rx="2" fill="#0c97f1"/><path d="M3.6,6.2 L4.3,3.4 H10.7 L11.4,6.2 Z" fill="none" stroke="#fff" stroke-width="1.1" stroke-linejoin="round"/><path d="M6,3.6V6M7.5,3.6V6M9,3.6V6" stroke="#fff" stroke-width=".8"/><path d="M3.8,6.4H11.2V8.6A1.4,1.4 0 0 1 9.8,10H5.2A1.4,1.4 0 0 1 3.8,8.6Z" fill="#fff"/><path d="M5.5,10.6H9.5" stroke="#fff" stroke-width=".9"/></svg></div>
<div class="t" style="left:36px;top:529.27px;font-size:11.5px;line-height:1;color:#3d4451;font-weight:400;-webkit-text-stroke:0.21px #3d4451;">Website</div>
<div class="abs" style="left:13px;top:552.5px;width:15px;height:15px"><svg width="15" height="15" viewBox="0 0 15 15"><rect width="15" height="15" rx="3" fill="#2c6ef2"/><path d="M3.2,9.2 L8.3,3.9 L11.6,3.4 L11.7,6.7 L6.4,12 Z" fill="#fff" stroke="#fff" stroke-width=".8" stroke-linejoin="round"/><circle cx="10.1" cy="5" r=".7" fill="#2c6ef2"/><path d="M8.2,6 L6.3,8.3 H7.9 L6.7,10.3" fill="none" stroke="#2c6ef2" stroke-width=".9" stroke-linejoin="round"/></svg></div>
<div class="t" style="left:36px;top:555.27px;font-size:11.5px;line-height:1;color:#3d4451;font-weight:400;-webkit-text-stroke:0.21px #3d4451;">Haravan POS</div>
<div class="abs" style="left:158px;top:530px"><svg width="13" height="9" viewBox="0 0 13 9"><path d="M0.5 4.5C2 1.8 4 .6 6.5.6s4.5 1.2 6 3.9c-1.5 2.7-3.5 3.9-6 3.9S2 7.2.5 4.5z" fill="#c8ccd3"/><circle cx="6.5" cy="4.5" r="1.9" fill="#eef0f3"/><circle cx="6.5" cy="4.5" r="1" fill="#c8ccd3"/></svg></div>
<div class="abs" style="left:13px;top:577px;width:15px;height:3px;background:#1da1f2;border-radius:2px 2px 0 0"></div>
<div class="abs" style="left:0;top:579px;width:191px;height:38px;background:#eef0f3;border-top:1px solid #dcdfe4"></div>
<div class="abs" style="left:13.9px;top:590.7px"><svg width="15" height="15" viewBox="0 0 15 15" fill="none" stroke="#4b5260" stroke-width="1.5" stroke-linejoin="round"><path d="M5.28,3.13 L6.15,2.79 L6.15,1.14 L8.85,1.14 L8.85,2.79 L10.17,3.39 L10.90,3.98 L12.33,3.15 L13.68,5.49 L12.25,6.31 L12.39,7.76 L12.25,8.69 L13.68,9.51 L12.33,11.85 L10.90,11.02 L9.72,11.87 L8.85,12.21 L8.85,13.86 L6.15,13.86 L6.15,12.21 L4.83,11.61 L4.10,11.02 L2.67,11.85 L1.32,9.51 L2.75,8.69 L2.61,7.24 L2.75,6.31 L1.32,5.49 L2.67,3.15 L4.10,3.98Z"/><circle cx="7.5" cy="7.5" r="2.4" fill="#4b5260" stroke="none"/></svg></div>
<div class="t" style="left:36px;top:593.27px;font-size:11.5px;line-height:1;color:#3d4451;font-weight:400;-webkit-text-stroke:0.21px #3d4451;">Cấu hình</div>
<div class="abs" style="left:16px;top:57.5px"><svg width="13" height="13" viewBox="0 0 13 13" fill="none" stroke="#4b5260" stroke-width="1.7"><circle cx="5.3" cy="5.3" r="4"/><path d="M8.3 8.3l3.8 3.8" stroke-linecap="round"/></svg></div>
<div class="t" style="left:37px;top:59.27px;font-size:11.5px;line-height:1;color:#a0a6b1;font-weight:400;-webkit-text-stroke:0.21px #a0a6b1;">Tìm kiếm</div>
<div class="t" style="left:148.5px;top:59.69px;font-size:11px;line-height:1;color:#9ca3af;font-weight:400;-webkit-text-stroke:0.4px #9ca3af;letter-spacing:-0.2px">Ctrl K</div>
<div class="abs" style="left:146px;top:113px;width:29px;height:17px;border-radius:9px;background:#fff;font-size:9px;line-height:17.5px;text-align:center;color:#2f3744;-webkit-text-stroke:0.2px #2f3744;letter-spacing:-0.1px">11382</div>
<div class="abs" style="left:150px;top:189px;width:25px;height:18px;border-radius:5px;background:#e7e9ed"></div>
<div class="abs" style="left:156px;top:193px"><svg width="14" height="11" viewBox="0 0 14 11" fill="none" stroke="#959ba6" stroke-width="1.3" stroke-linejoin="round"><path d="M11.8,4.8V0.7H0.8V8.6H6.5"/><path d="M11.8,8.2L7.6,5.6" stroke-linecap="round"/><path d="M7.2,5.3l2.6,-.3-1.6,2.3z" fill="#959ba6"/></svg></div>
</div>
</body></html>
